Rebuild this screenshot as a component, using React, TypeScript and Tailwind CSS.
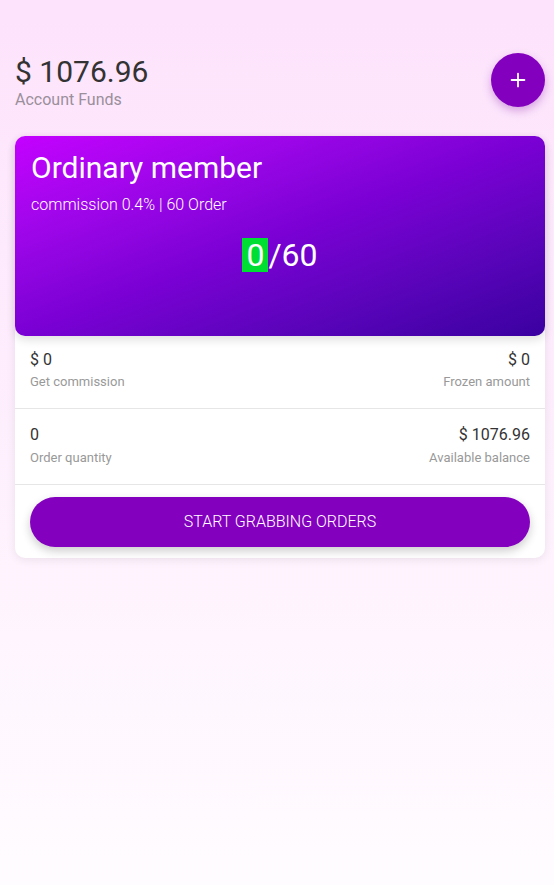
import React from 'react';
import { Plus } from 'lucide-react';

const stats = [
  { left: '$ 0', leftLabel: 'Get commission', right: '$ 0', rightLabel: 'Frozen amount' },
  { left: '0', leftLabel: 'Order quantity', right: '$ 1076.96', rightLabel: 'Available balance' },
];

export default function App() {
  return (
    <div
      className="min-h-[885px] w-full bg-gradient-to-b from-[#fde3fc] to-[#fffcff] pl-[15px] pr-[9px] pt-[53px]"
      style={{ fontFamily: 'Roboto, "Liberation Sans", sans-serif' }}
    >
      <div className="flex items-start justify-between">
        <div className="pt-[1px]">
          <div className="text-[30px] leading-[36px] text-[#333333]">$ 1076.96</div>
          <div className="-mt-[2px] text-[16px] leading-[24px] text-[#9a8f9a]">Account Funds</div>
        </div>
        <button className="flex h-[54px] w-[54px] items-center justify-center rounded-full bg-[#8400bf] text-white shadow-[0_4px_10px_rgba(120,0,160,0.3)]">
          <Plus className="h-[22px] w-[22px]" strokeWidth={2} />
        </button>
      </div>

      <div className="mt-[24px] rounded-[10px] bg-white shadow-[0_2px_10px_rgba(0,0,0,0.08)]">
        <div className="h-[200px] rounded-[10px] bg-gradient-to-br from-[#c400ff] via-[#7a00d4] to-[#3a00a0] px-[16px] pt-[13px] text-white shadow-[0_4px_10px_rgba(0,0,0,0.12)]">
          <div className="text-[30px] leading-[38px]">Ordinary member</div>
          <div className="mt-[8px] text-[16px] font-light leading-[20px]">commission 0.4% | 60 Order</div>
          <div className="mt-[23px] flex justify-center text-[32px] leading-[34px]">
            <span className="bg-[#00dd33] px-[4px]">0</span>
            <span>/60</span>
          </div>
        </div>

        {stats.map((s, i) => (
          <div
            key={i}
            className={`flex justify-between px-[15px] ${i === 0 ? 'h-[73px] pt-[14px]' : 'h-[76px] pt-[16px]'} border-b border-[#e6e6e6]`}
          >
            <div>
              <div className="text-[16px] leading-[20px] text-[#333333]">{s.left}</div>
              <div className={`${i === 0 ? 'mt-[4px]' : 'mt-[5px]'} text-[13px] leading-[16px] text-[#999999]`}>{s.leftLabel}</div>
            </div>
            <div className="text-right">
              <div className="text-[16px] leading-[20px] text-[#333333]">{s.right}</div>
              <div className={`${i === 0 ? 'mt-[4px]' : 'mt-[5px]'} text-[13px] leading-[16px] text-[#999999]`}>{s.rightLabel}</div>
            </div>
          </div>
        ))}

        <div className="px-[15px] pb-[11px] pt-[12px]">
          <button className="h-[50px] w-full rounded-full bg-[#8400bf] text-[16px] font-light text-white shadow-[0_4px_10px_rgba(0,0,0,0.2)]">
            START GRABBING ORDERS
          </button>
        </div>
      </div>
    </div>
  );
}
